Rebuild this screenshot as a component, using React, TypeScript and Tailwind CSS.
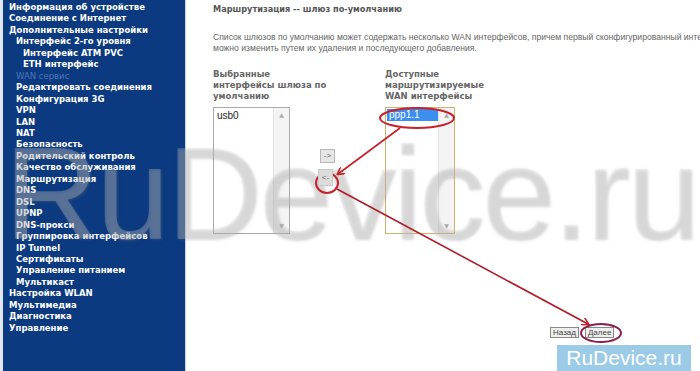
import React from "react";

const menu: { label: string; level: number; muted?: boolean }[] = [
  { label: "Информация об устройстве", level: 0 },
  { label: "Соединение с Интернет", level: 0 },
  { label: "Дополнительные настройки", level: 0 },
  { label: "Интерфейс 2-го уровня", level: 1 },
  { label: "Интерфейс ATM PVC", level: 2 },
  { label: "ETH интерфейс", level: 2 },
  { label: "WAN сервис", level: 1, muted: true },
  { label: "Редактировать соединения", level: 1 },
  { label: "Конфигурация 3G", level: 1 },
  { label: "VPN", level: 1 },
  { label: "LAN", level: 1 },
  { label: "NAT", level: 1 },
  { label: "Безопасность", level: 1 },
  { label: "Родительский контроль", level: 1 },
  { label: "Качество обслуживания", level: 1 },
  { label: "Маршрутизация", level: 1 },
  { label: "DNS", level: 1 },
  { label: "DSL", level: 1 },
  { label: "UPNP", level: 1 },
  { label: "DNS-прокси", level: 1 },
  { label: "Группировка интерфейсов", level: 1 },
  { label: "IP Tunnel", level: 1 },
  { label: "Сертификаты", level: 1 },
  { label: "Управление питанием", level: 1 },
  { label: "Мультикаст", level: 1 },
  { label: "Настройка WLAN", level: 0 },
  { label: "Мультимедиа", level: 0 },
  { label: "Диагностика", level: 0 },
  { label: "Управление", level: 0 },
];

const indent = ["pl-[6px]", "pl-[13px]", "pl-[20px]"];

const arial = { fontFamily: "'Liberation Sans', Arial, sans-serif" };

const ScrollBar = () => (
  <div className="flex w-[16px] flex-col justify-between border-l border-[#e4e4e4] bg-[#f4f4f4] text-[6px] leading-none text-[#aaa]">
    <span className="py-[4px] text-center">▲</span>
    <span className="py-[4px] text-center">▼</span>
  </div>
);

export default function App() {
  return (
    <div
      className="relative flex h-[371px] w-[700px] overflow-hidden bg-white"
      style={{ fontFamily: "Tahoma, 'DejaVu Sans', 'Liberation Sans', sans-serif" }}
    >
      {/* Sidebar */}
      <div className="h-full w-[186px] shrink-0 border-l-[3px] border-r border-l-[#dfe6f2] border-r-[#c9d3e6] bg-[#0b3a80] pt-[2px]">
        {menu.map((m) => (
          <div
            key={m.label}
            className={`${indent[m.level]} h-[11.46px] whitespace-nowrap text-[8.5px] leading-[11.46px] ${
              m.muted ? "font-normal text-[#4f74b8]" : "font-bold text-white"
            }`}
          >
            {m.label}
          </div>
        ))}
      </div>

      {/* Main */}
      <div className="flex min-w-0 flex-1 flex-col overflow-hidden pl-[27px] pt-[3px] text-[#666]">
        <div className="h-[12px] text-[8.2px] font-bold leading-[12px] text-[#555]">
          Маршрутизация -- шлюз по-умолчанию
        </div>
        <div className="mt-[17px] whitespace-nowrap text-[8.6px] leading-[11px] text-[#666]" style={arial}>
          Список шлюзов по умолчанию может содержать несколько WAN интерфейсов, причем первый сконфигурированный интерфейс
          <br />
          можно изменить путем их удаления и последующего добавления.
        </div>

        <div className="mt-[15px] flex">
          {/* Left column */}
          <div className="flex w-[106px] shrink-0 flex-col">
            <div className="h-[38px] whitespace-nowrap text-[8.5px] font-bold leading-[11px] text-[#666]">
              Выбранные
              <br />
              интерфейсы шлюза по
              <br />
              умолчанию
            </div>
            <div className="flex h-[127px] w-[77px] border border-[#aaa] bg-white">
              <div className="flex-1 pl-[3px] pt-[2px] text-[10px] leading-[12px] text-[#222]" style={arial}>
                usb0
              </div>
              <ScrollBar />
            </div>
          </div>

          {/* Arrow buttons */}
          <div className="relative z-10 flex w-[66px] shrink-0 flex-col items-start pt-[80px]">
            <div className="ml-[1px] flex h-[14px] w-[15px] items-center justify-center border border-[#b8b8b8] bg-[#e6e6e6] text-[8px] leading-none text-[#666]" style={arial}>
              -&gt;
            </div>
            <div className="ml-[-1px] mt-[6px] flex h-[17px] w-[15px] items-center justify-center border border-[#c8c8c8] bg-[#dcdcdc] text-[8px] leading-none text-[#666]" style={arial}>
              &lt;-
            </div>
          </div>

          {/* Right column */}
          <div className="flex flex-col">
            <div className="h-[38px] whitespace-nowrap text-[8.5px] font-bold leading-[11px] text-[#666]">
              Доступные
              <br />
              маршрутизируемые
              <br />
              WAN интерфейсы
            </div>
            <div className="flex h-[127px] w-[70px] border border-[#d2b26a] bg-white">
              <div className="flex-1 pt-[1px]">
                <div className="ml-[1px] h-[12px] bg-[#3b8ff0] pl-[2px] text-[10px] leading-[12px] text-white" style={arial}>
                  ppp1.1
                </div>
              </div>
              <ScrollBar />
            </div>
          </div>
        </div>

        <div className="mt-auto mb-[33px] flex gap-[6px] pl-[337px]" style={arial}>
          <div className="border border-[#888] bg-[#eee] px-[2px] text-[8px] leading-[9px] text-[#444]">Назад</div>
          <div className="border border-[#888] bg-[#eee] px-[2px] text-[8px] leading-[9px] text-[#444]">Далее</div>
        </div>
      </div>

      {/* Watermark */}
      <div
        className="pointer-events-none absolute left-[4px] top-[128px] whitespace-nowrap text-[132px] leading-none tracking-[-3px] text-[rgba(220,220,220,0.26)]"
        style={{ ...arial, textShadow: "1px 1px 3px rgba(120,120,120,0.3)" }}
      >
        RuDevice.ru
      </div>

      {/* Annotations */}
      <svg className="pointer-events-none absolute inset-0" width="700" height="371" viewBox="0 0 700 371">
        <defs>
          <marker id="ah" markerWidth="8" markerHeight="8" refX="6" refY="4" orient="auto" markerUnits="userSpaceOnUse">
            <path d="M0,0 L7,4 L0,8" fill="none" stroke="#c8202a" strokeWidth="1.6" />
          </marker>
        </defs>
        <ellipse cx="417" cy="118" rx="37" ry="10" fill="none" stroke="#c8202a" strokeWidth="2" />
        <line x1="400" y1="128" x2="338" y2="174" stroke="#c8202a" strokeWidth="1.6" markerEnd="url(#ah)" />
        <ellipse cx="327" cy="183" rx="11" ry="10" fill="none" stroke="#c8202a" strokeWidth="2" />
        <line x1="337" y1="189" x2="588" y2="324" stroke="#b01c28" strokeWidth="1.6" markerEnd="url(#ah)" />
        <ellipse cx="601" cy="333" rx="20" ry="9" fill="none" stroke="#8a2050" strokeWidth="2" />
      </svg>

      {/* Logo badge */}
      <div
        className="absolute left-[557px] top-[345px] flex h-[26px] w-[134px] items-center justify-center bg-[#9ccbe8] text-[21px] text-white"
        style={arial}
      >
        RuDevice.ru
      </div>
    </div>
  );
}
